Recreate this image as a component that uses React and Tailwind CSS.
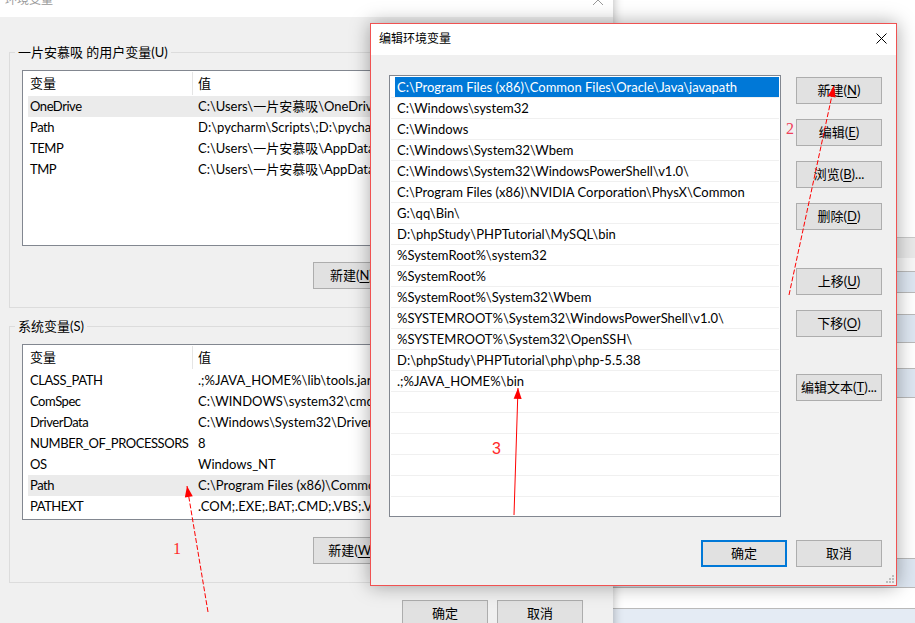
import React from "react";

// values are cut where the dialog covers them
const userVars = [
  ["OneDrive", "C:\\Users\\一片安慕吸\\OneDrive"],
  ["Path", "D:\\pycharm\\Scripts\\;D:\\pycharm\\"],
  ["TEMP", "C:\\Users\\一片安慕吸\\AppData\\"],
  ["TMP", "C:\\Users\\一片安慕吸\\AppData\\"],
];

const sysVars = [
  ["CLASS_PATH", ".;%JAVA_HOME%\\lib\\tools.jar;"],
  ["ComSpec", "C:\\WINDOWS\\system32\\cmd.exe"],
  ["DriverData", "C:\\Windows\\System32\\Drivers\\"],
  ["NUMBER_OF_PROCESSORS", "8"],
  ["OS", "Windows_NT"],
  ["Path", "C:\\Program Files (x86)\\Common"],
  ["PATHEXT", ".COM;.EXE;.BAT;.CMD;.VBS;.VBE"],
];

const paths = [
  "C:\\Program Files (x86)\\Common Files\\Oracle\\Java\\javapath",
  "C:\\Windows\\system32",
  "C:\\Windows",
  "C:\\Windows\\System32\\Wbem",
  "C:\\Windows\\System32\\WindowsPowerShell\\v1.0\\",
  "C:\\Program Files (x86)\\NVIDIA Corporation\\PhysX\\Common",
  "G:\\qq\\Bin\\",
  "D:\\phpStudy\\PHPTutorial\\MySQL\\bin",
  "%SystemRoot%\\system32",
  "%SystemRoot%",
  "%SystemRoot%\\System32\\Wbem",
  "%SYSTEMROOT%\\System32\\WindowsPowerShell\\v1.0\\",
  "%SYSTEMROOT%\\System32\\OpenSSH\\",
  "D:\\phpStudy\\PHPTutorial\\php\\php-5.5.38",
  ".;%JAVA_HOME%\\bin",
  "", "", "", "", "", "",
];

const Btn = ({ label, k, suffix = "", primary = false, className = "" }) => (
  <div
    className={`flex h-[27px] w-[86px] shrink-0 items-center justify-center bg-[#e1e1e1] whitespace-nowrap ${
      primary ? "border-2 border-[#0078d7]" : "border border-[#adadad]"
    } ${className}`}
  >
    {label}
    {k && (
      <>
        (<span className="underline underline-offset-2">{k}</span>)
      </>
    )}
    {suffix}
  </div>
);

const VarList = ({ rows, sel }) => (
  <div className="mx-[12px] h-[176px] overflow-hidden border border-[#828790] bg-white">
    <div className="flex h-[25px] items-center">
      <div className="w-[169px] pl-[7px]">变量</div>
      <div className="h-[23px] w-px bg-[#e5e5e5]" />
      <div className="pl-[5px]">值</div>
    </div>
    {rows.map(([k, v], i) => (
      <div key={k} className={`ml-[5px] flex h-[21px] items-center whitespace-nowrap ${i === sel ? "bg-[#ebebeb]" : ""}`}>
        <div className="w-[164px] shrink-0 pl-[2px] tracking-[-0.45px]">{k}</div>
        <div className="pl-[6px]">{v}</div>
      </div>
    ))}
  </div>
);

// the other buttons of the row sit under the dialog, only 新建 shows
const GroupBox = ({ title, rows, sel, btnKey, h, btnGap }) => (
  <div className={`mx-[9px] border border-[#dcdcdc] ${h}`}>
    <div className="-mt-[9px] ml-[5px] w-fit bg-[#f0f0f0] px-[3px] leading-[17px]">{title}</div>
    <div className="mt-[9px]">
      <VarList rows={rows} sel={sel} />
    </div>
    <div className={`flex justify-end pr-[204px] ${btnGap}`}>
      <Btn label="新建" k={btnKey} suffix="..." />
    </div>
  </div>
);

// arrowhead polygon for a line ending at (x2, y2)
function head(x1, y1, x2, y2, len = 11, w = 4) {
  const dx = x2 - x1;
  const dy = y2 - y1;
  const L = Math.hypot(dx, dy);
  const ux = dx / L;
  const uy = dy / L;
  const bx = x2 - ux * len;
  const by = y2 - uy * len;
  return `${x2},${y2} ${bx - uy * w},${by + ux * w} ${bx + uy * w},${by - ux * w}`;
}

const arrows = [
  { x1: 208, y1: 612, x2: 187, y2: 486, dash: "5 2" },
  { x1: 789, y1: 295, x2: 834, y2: 86, dash: "5 2" },
  { x1: 514, y1: 515, x2: 518, y2: 388, dash: "" },
];

export default function App() {
  return (
    <div className="relative h-[623px] w-[915px] overflow-hidden bg-white font-['Lato','Noto_Sans_CJK_SC',sans-serif] text-[13px] text-black">
      {/* window behind, right side */}
      <div className="absolute left-[613px] top-0 flex h-[623px] w-[302px] flex-col bg-white">
        <div className="h-[237px]" />
        <div className="h-[21px] border-t border-[#c9c9c9] bg-[#e9e9e9]" />
        <div className="h-[13px] bg-[#f7f7f7]" />
        <div className="h-[22px] border-t border-b border-[#b9b9b9] border-b-dashed bg-[#dde6f1]" />
        <div className="h-[21px]" />
        <div className="h-[29px] border-t border-b border-[#b9b9b9] border-b-dashed bg-[#dde6f1]" />
        <div className="h-[25px]" />
        <div className="h-[30px] border-t border-b border-[#b9b9b9] border-b-dashed bg-[#dde6f1]" />
        <div className="h-[160px]" />
        <div className="h-[30px] border-t border-b border-[#b9b9b9] border-b-dashed bg-[#dde6f1]" />
        <div className="h-[20px]" />
        <div className="flex-1 border-t border-[#b9b9b9] bg-[#e4ebf4]" />
      </div>

      {/* parent window 环境变量 */}
      <div className="absolute left-0 top-[-14px] flex h-[650px] w-[613px] flex-col bg-[#f0f0f0] shadow-[0_0_10px_rgba(0,0,0,0.3)]">
        <div className="flex h-[31px] items-center justify-between bg-white pb-[3px] pl-[5px] pr-[10px] text-[12px] text-[#999999]">
          <span>环境变量</span>
          <svg width="10" height="10" viewBox="0 0 10 10">
            <path d="M0 0L10 10M10 0L0 10" stroke="#999999" strokeWidth="1" />
          </svg>
        </div>
        <div className="mt-[35px]">
          <GroupBox title="一片安慕吸 的用户变量(U)" rows={userVars} sel={0} btnKey="N" h="h-[256px]" btnGap="mt-[16px]" />
        </div>
        <div className="mt-[18px]">
          <GroupBox title="系统变量(S)" rows={sysVars} sel={5} btnKey="W" h="h-[257px]" btnGap="mt-[17px]" />
        </div>
        <div className="mt-[17px] flex justify-end gap-[9px] pr-[30px]">
          <Btn label="确定" />
          <Btn label="取消" />
        </div>
      </div>

      {/* dialog 编辑环境变量 */}
      <div className="absolute left-[370px] top-[23px] flex h-[563px] w-[527px] flex-col border border-[#f05252] bg-[#f0f0f0] shadow-[0_0_18px_rgba(0,0,0,0.35)]">
        <div className="flex h-[31px] items-center justify-between bg-white pb-[2px] pl-[8px] pr-[9px] text-[12px]">
          <span>编辑环境变量</span>
          <svg width="11" height="11" viewBox="0 0 11 11">
            <path d="M0.5 0.5L10.5 10.5M10.5 0.5L0.5 10.5" stroke="#000" strokeWidth="1" />
          </svg>
        </div>
        <div className="flex pl-[18px] pt-[20px]">
          <div className="h-[442px] w-[392px] overflow-hidden border border-[#828790] bg-white p-px">
            {paths.map((p, i) => (
              <div key={i} className="flex h-[21px] border-b border-[#f0f0f0]">
                <div className={`ml-[4px] h-[20px] flex-1 whitespace-nowrap pl-[2px] leading-[20px] ${i === 0 ? "bg-[#0078d7] text-white" : ""}`}>
                  {p}
                </div>
              </div>
            ))}
          </div>
          <div className="ml-[15px] flex flex-col">
            <Btn label="新建" k="N" className="mt-[2px]" />
            <Btn label="编辑" k="E" className="mt-[15px]" />
            <Btn label="浏览" k="B" suffix="..." className="mt-[15px]" />
            <Btn label="删除" k="D" className="mt-[15px]" />
            <Btn label="上移" k="U" className="mt-[38px]" />
            <Btn label="下移" k="O" className="mt-[15px]" />
            <Btn label="编辑文本" k="T" suffix="..." className="mt-[37px]" />
          </div>
        </div>
        <div className="mt-[23px] flex justify-end gap-[9px] pr-[14px]">
          <Btn label="确定" primary />
          <Btn label="取消" />
        </div>
        <svg className="absolute bottom-[2px] right-[2px]" width="8" height="8" viewBox="0 0 8 8">
          <rect x="6" y="0" width="2" height="2" fill="#bdbdbd" />
          <rect x="3" y="3" width="2" height="2" fill="#bdbdbd" />
          <rect x="6" y="3" width="2" height="2" fill="#bdbdbd" />
          <rect x="0" y="6" width="2" height="2" fill="#bdbdbd" />
          <rect x="3" y="6" width="2" height="2" fill="#bdbdbd" />
          <rect x="6" y="6" width="2" height="2" fill="#bdbdbd" />
        </svg>
      </div>

      {/* red annotations */}
      <svg className="pointer-events-none absolute left-0 top-0" width="915" height="623">
        {arrows.map((a, i) => (
          <g key={i}>
            <line x1={a.x1} y1={a.y1} x2={a.x2} y2={a.y2} stroke="#ff0000" strokeWidth="1" strokeDasharray={a.dash || undefined} />
            <polygon points={head(a.x1, a.y1, a.x2, a.y2)} fill="#ff0000" />
          </g>
        ))}
        <text x="173" y="554" fill="#ff2a2a" fontSize="16" fontFamily="Liberation Serif, serif">1</text>
        <text x="786" y="134" fill="#f0405a" fontSize="16" fontFamily="Liberation Serif, serif">2</text>
        <text x="492" y="454" fill="#ff2a2a" fontSize="16" fontFamily="Liberation Sans, sans-serif">3</text>
      </svg>
    </div>
  );
}
